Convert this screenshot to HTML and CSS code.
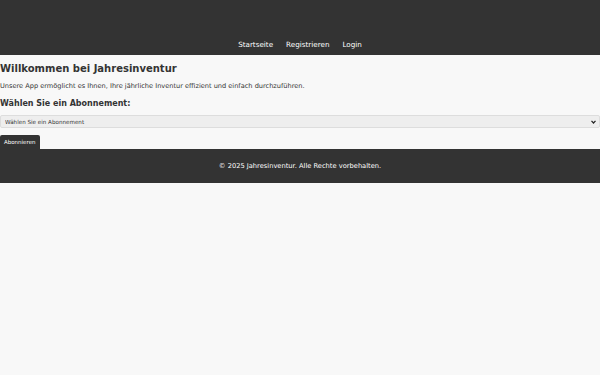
FILE: index.html
```html
<!DOCTYPE html>
<html lang="de">
<head>
<meta charset="utf-8">
<title>Jahresinventur</title>
<link rel="stylesheet" href="styles.css">
</head>
<body>
<header class="site-header">
  <nav class="nav">
    <a href="#" class="nav-link">Startseite</a>
    <a href="#" class="nav-link">Registrieren</a>
    <a href="#" class="nav-link">Login</a>
  </nav>
</header>
<main class="content">
  <h1 class="title">Willkommen bei Jahresinventur</h1>
  <p class="intro">Unsere App ermöglicht es Ihnen, Ihre jährliche Inventur effizient und einfach durchzuführen.</p>
  <h2 class="subtitle">Wählen Sie ein Abonnement:</h2>
  <div class="select-wrap">
    <select class="plan-select">
      <option>Wählen Sie ein Abonnement</option>
    </select>
    <svg class="select-arrow" width="5" height="4" viewBox="0 0 5 4"><path d="M0.5 0.8 L2.5 3 L4.5 0.8" fill="none" stroke="#222" stroke-width="1.2"/></svg>
  </div>
  <button class="subscribe-btn">Abonnieren</button>
</main>
<footer class="site-footer">
  <p class="footer-text">© 2025 Jahresinventur. Alle Rechte vorbehalten.</p>
</footer>
</body>
</html>
```
FILE: styles.css
```css
html, body {
  margin: 0;
  padding: 0;
  background: #f8f8f8;
  color: #333;
  font-family: "DejaVu Sans", sans-serif;
}
.site-header {
  background: #333;
  height: 55px;
  box-sizing: border-box;
  display: flex;
  align-items: flex-end;
  justify-content: center;
  padding-bottom: 6px;
}
.nav {
  display: flex;
  gap: 13px;
}
.nav-link {
  color: #fff;
  text-decoration: none;
  font-size: 7.2px;
  line-height: 9px;
}
.content {
  display: flex;
  flex-direction: column;
  align-items: flex-start;
  padding-top: 7px;
}
.title {
  font-size: 10px;
  line-height: 13px;
  margin: 0;
  font-weight: bold;
}
.intro {
  font-size: 6.6px;
  line-height: 8px;
  margin: 7px 0 0;
}
.subtitle {
  font-size: 8px;
  line-height: 10px;
  margin: 9px 0 0;
  font-weight: bold;
}
.select-wrap {
  position: relative;
  width: 100%;
  margin-top: 6px;
}
.plan-select {
  display: block;
  width: 100%;
  height: 13px;
  margin: 0;
  -webkit-appearance: none;
  appearance: none;
  font-family: "DejaVu Sans", sans-serif;
  font-size: 5.6px;
  background: #eee;
  border: 1px solid #ddd;
  border-radius: 2px;
  color: #333;
  padding: 0 4px;
}
.select-arrow {
  position: absolute;
  right: 4px;
  top: 5px;
}
.subscribe-btn {
  margin-top: 7px;
  background: #333;
  color: #fff;
  border: none;
  border-radius: 2px 2px 0 0;
  font-family: "DejaVu Sans", sans-serif;
  font-size: 5.5px;
  height: 14px;
  padding: 0 4px;
}
.site-footer {
  background: #333;
  color: #fff;
  height: 34px;
  display: flex;
  align-items: center;
  justify-content: center;
}
.footer-text {
  margin: 0;
  font-size: 6.7px;
}
```
